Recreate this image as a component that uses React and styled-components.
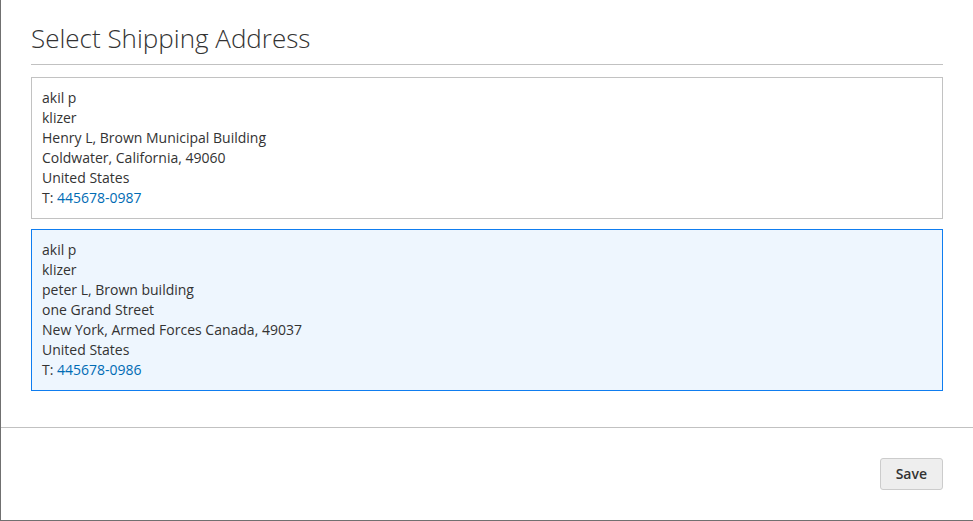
import React from "react";
import styled, { createGlobalStyle } from "styled-components";

const GlobalStyle = createGlobalStyle`
  html, body {
    margin: 0;
    padding: 0;
    background: #fff;
  }
  body {
    font-family: "Open Sans", "Liberation Sans", sans-serif;
    color: #333;
  }
`;

const Modal = styled.div`
  box-sizing: border-box;
  width: 973px;
  height: 521px;
  background: #fff;
  border-left: 1px solid #707070;
  border-bottom: 1px solid #707070;
  display: flex;
  flex-direction: column;
`;

const Header = styled.header`
  padding: 24px 30px 0;
`;

const Title = styled.h1`
  margin: 0;
  padding-bottom: 12px;
  border-bottom: 1px solid #c1c1c1;
  font-size: 26px;
  font-weight: 300;
  line-height: 28px;
  color: #333;
`;

const Content = styled.div`
  padding: 12px 30px 36px;
  display: flex;
  flex-direction: column;
  gap: 10px;
`;

const AddressBox = styled.div`
  border: 1px solid ${(p) => (p.selected ? "#0f7df0" : "#c2c2c2")};
  background: ${(p) => (p.selected ? "#eef6fe" : "#fff")};
  padding: 10px;
  font-size: 14px;
  line-height: 20px;
  color: #333;
  cursor: pointer;
`;

const Line = styled.div``;

const Phone = styled.a`
  color: #006bb4;
  text-decoration: none;
`;

const Footer = styled.footer`
  margin-top: auto;
  border-top: 1px solid #c1c1c1;
  padding: 30px;
  display: flex;
  justify-content: flex-end;
`;

const Button = styled.button`
  font-family: "Open Sans", "Liberation Sans", sans-serif;
  font-size: 14px;
  font-weight: 600;
  line-height: 16px;
  padding: 7px 15px;
  background: #eee;
  border: 1px solid #ccc;
  border-radius: 3px;
  color: #333;
  cursor: pointer;
`;

const addresses = [
  {
    lines: [
      "akil p",
      "klizer",
      "Henry L, Brown Municipal Building",
      "Coldwater, California, 49060",
      "United States",
    ],
    phone: "445678-0987",
  },
  {
    lines: [
      "akil p",
      "klizer",
      "peter L, Brown building",
      "one Grand Street",
      "New York, Armed Forces Canada, 49037",
      "United States",
    ],
    phone: "445678-0986",
    selected: true,
  },
];

const App = () => {
  return (
    <>
      <GlobalStyle />
      <Modal>
        <Header>
          <Title>Select Shipping Address</Title>
        </Header>
        <Content>
          {addresses.map((a, i) => (
            <AddressBox key={i} selected={a.selected}>
              {a.lines.map((l, j) => (
                <Line key={j}>{l}</Line>
              ))}
              <Line>
                T: <Phone href="#">{a.phone}</Phone>
              </Line>
            </AddressBox>
          ))}
        </Content>
        <Footer>
          <Button>Save</Button>
        </Footer>
      </Modal>
    </>
  );
};

export default App;
